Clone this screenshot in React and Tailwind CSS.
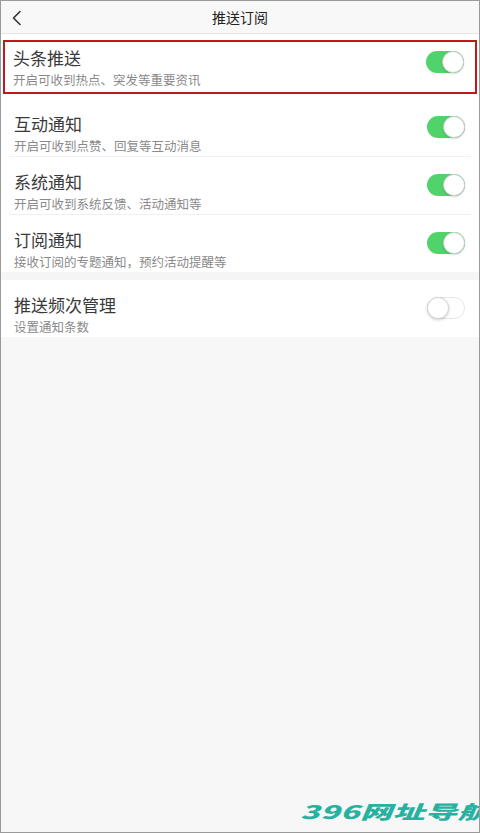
const rows = [
  { title: "互动通知", desc: "开启可收到点赞、回复等互动消息", on: true, h: "h-[58px]" },
  { title: "系统通知", desc: "开启可收到系统反馈、活动通知等", on: true, h: "h-[58px]" },
  { title: "订阅通知", desc: "接收订阅的专题通知，预约活动提醒等", on: true, h: "h-[57px]" },
];

function Toggle({ on }) {
  return on ? (
    <div className="relative w-[38px] h-[22px] rounded-full bg-[#4fd36a]">
      <div className="absolute right-0 top-0 w-[22px] h-[22px] rounded-full bg-white border border-[#cfcfcf] shadow-[0_1px_2px_rgba(0,0,0,0.15)]" />
    </div>
  ) : (
    <div className="relative w-[38px] h-[22px] rounded-full bg-white border border-[#e6e6e6]">
      <div className="absolute left-[-1px] top-[-1px] w-[22px] h-[22px] rounded-full bg-white border border-[#d6d6d6] shadow-[0_1px_3px_rgba(0,0,0,0.2)]" />
    </div>
  );
}

function Row({ title, desc, on, last, h = "h-[57px]" }) {
  return (
    <div className={`${h} flex items-start justify-between pl-[13px] pr-[14px] bg-white relative`}>
      <div className="pt-[14px]">
        <div className="text-[17px] leading-[22px] text-[#3a3a3a]">{title}</div>
        <div className="mt-[2px] text-[12.5px] leading-[18px] text-[#8a8a8a]">{desc}</div>
      </div>
      <div className="pt-[17px]">
        <Toggle on={on} />
      </div>
      {!last && <div className="absolute left-[8px] right-[8px] bottom-0 h-px bg-[#f0f0f0]" />}
    </div>
  );
}

export default function App() {
  return (
    <div
      className="relative w-[480px] h-[833px] bg-[#f7f7f7] border border-[#9a9a9a] overflow-hidden"
      style={{ fontFamily: '"Noto Sans CJK SC", "Noto Sans", sans-serif' }}
    >
      <div className="h-[33px] flex items-center justify-center relative bg-[#f8f8f8] border-b border-[#e3e3e3]">
        <svg className="absolute left-[10px] top-[9px]" width="12" height="16" viewBox="0 0 12 16">
          <path d="M9 1.5 L2.5 8 L9 14.5" fill="none" stroke="#333" strokeWidth="1.6" strokeLinecap="round" strokeLinejoin="round" />
        </svg>
        <span className="text-[14px] text-[#222]">推送订阅</span>
      </div>

      <div className="bg-white pt-[6px] pb-[5px] px-[2px]">
        <div className="h-[54px] border-2 border-[#c0181f] flex items-start justify-between pl-[8px] pr-[11px]">
          <div className="pt-[5px]">
            <div className="text-[17px] leading-[22px] text-[#3a3a3a]">头条推送</div>
            <div className="mt-[2px] text-[12.5px] leading-[18px] text-[#8a8a8a]">开启可收到热点、突发等重要资讯</div>
          </div>
          <div className="pt-[9px]">
            <Toggle on />
          </div>
        </div>
      </div>

      {rows.map((r, i) => (
        <Row key={r.title} {...r} last={i === rows.length - 1} />
      ))}

      <div className="h-[8px] bg-[#f5f5f5]" />

      <Row title="推送频次管理" desc="设置通知条数" on={false} last />

      <div className="absolute left-[299px] top-[801px] whitespace-nowrap text-[32px] font-black italic tracking-[0.5px] text-[#27b1a0] scale-y-[0.58] origin-top-left leading-none">
        396网址导航
      </div>
    </div>
  );
}
